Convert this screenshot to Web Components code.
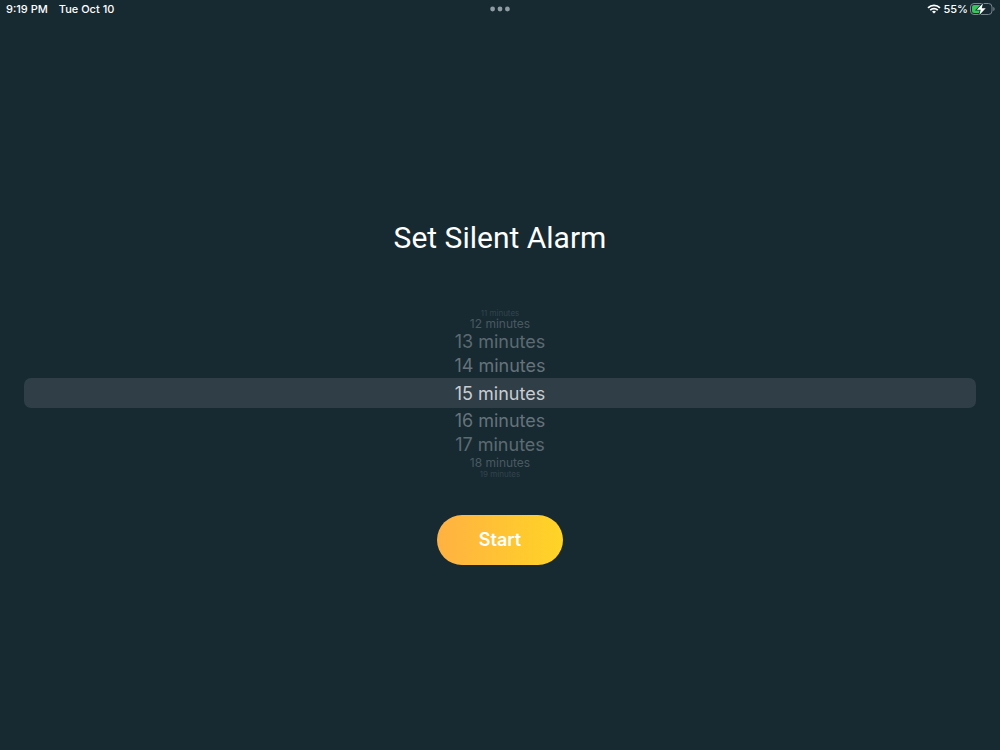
<!DOCTYPE html>
<html lang="en">
<head>
<meta charset="utf-8">
<meta name="viewport" content="width=device-width, initial-scale=1">
<title>Set Silent Alarm</title>
<style>
  html, body { margin: 0; background: #172a32; }
  body { font-family: Inter, "Liberation Sans", sans-serif; color: #fff; }
</style>
</head>
<body>
<alarm-app></alarm-app>
<script>
class StatusBar extends HTMLElement {
  constructor() {
    super();
    this.attachShadow({ mode: "open" }).innerHTML = `
      <style>
        :host { display: grid; grid-template-columns: 1fr auto 1fr; align-items: center;
                height: 18px; padding: 0 5px; font-size: 11px; line-height: 18px; font-weight: 500; }
        .left, .right { display: flex; align-items: center; }
        .left { gap: 11px; padding-left: 1px; }
        .right { justify-content: flex-end; gap: 2px; }
        svg { display: block; }
      </style>
      <div class="left"><span>9:19 PM</span><span>Tue Oct 10</span></div>
      <svg width="20" height="6" viewBox="0 0 20 6" fill="#8f9ca3" aria-hidden="true">
        <circle cx="2.6" cy="3" r="2.4"/><circle cx="10" cy="3" r="2.4"/><circle cx="17.4" cy="3" r="2.4"/>
      </svg>
      <div class="right">
        <svg width="14" height="10" viewBox="0 0 14 10" fill="none" stroke="#fff" stroke-width="1.7" aria-label="Wi-Fi">
          <path d="M1 3.8a8.5 8.5 0 0 1 12 0M3.2 6.1a5.4 5.4 0 0 1 7.6 0"/>
          <path d="M7 9.6 5 7.7a2.8 2.8 0 0 1 4 0z" fill="#fff" stroke="none"/>
        </svg>
        <span>55%</span>
        <svg width="25" height="12" viewBox="0 0 25 12" aria-label="Charging">
          <rect x=".5" y=".5" width="21.5" height="11" rx="3.5" fill="none" stroke="#78868c"/>
          <path d="M23.3 4v4c.8-.3 1.3-1.1 1.3-2s-.5-1.7-1.3-2z" fill="#78868c"/>
          <path d="M4 2h8v8H4a2 2 0 0 1-2-2V4a2 2 0 0 1 2-2z" fill="#35c759"/>
          <path d="M13 .2 6.8 6.800h3.900L9.300 11.900 15.700 5.200h-4z" fill="#fff" stroke="#172a32" stroke-width="1.6" paint-order="stroke"/>
        </svg>
      </div>`;
  }
}
customElements.define("status-bar", StatusBar);

class MinuteWheel extends HTMLElement {
  connectedCallback() {
    const value = Number(this.getAttribute("value"));
    const rows = [];
    for (let step = -4; step <= 4; step++) {
      rows.push(`<label class="d${Math.abs(step)}"><input type="radio" name="minutes" value="${value + step}"${step ? "" : " checked"}><span>${value + step} minutes</span></label>`);
    }
    this.attachShadow({ mode: "open" }).innerHTML = `
      <style>
        :host { display: block; font-size: 18px; }
        fieldset { margin: 0; padding: 0; border: 0; min-width: 0; display: flex; flex-direction: column; }
        label { display: flex; justify-content: center; align-items: center; cursor: pointer; }
        input { appearance: none; width: 0; height: 0; margin: 0; }
        .d0 { height: 30px; border-radius: 7px; background: #303e47; color: #c9cdd0; }
        .d1 { height: 25px; color: #66737a; }
        .d2 { height: 23px; color: #5d6a71; }
        .d3 { height: 13px; color: #4a5960; font-size: 12px; line-height: 12px; }
        .d4 { height: 9px; color: #33444c; font-size: 8px; line-height: 8px; }
      </style>
      <fieldset aria-label="Alarm length">${rows.join("")}</fieldset>`;
  }
}
customElements.define("minute-wheel", MinuteWheel);

class PillButton extends HTMLElement {
  constructor() {
    super();
    this.attachShadow({ mode: "open" }).innerHTML = `
      <style>
        :host { display: block; }
        button { min-width: 126px; height: 50px; padding: 0 40px; border: 0; border-radius: 25px;
                 background: linear-gradient(90deg, #ffb142, #ffd426); color: #fff;
                 font: 600 18px/24px Inter, "Liberation Sans", sans-serif; cursor: pointer; }
      </style>
      <button type="button"><slot></slot></button>`;
  }
}
customElements.define("pill-button", PillButton);

class AlarmApp extends HTMLElement {
  constructor() {
    super();
    this.attachShadow({ mode: "open" }).innerHTML = `
      <style>
        :host { display: flex; flex-direction: column; min-height: 100vh; }
        main { flex: 1; display: flex; flex-direction: column; align-items: center; justify-content: center;
               padding: 16px 24px 0; }
        h1 { margin: 0 0 51px; font: 400 30px/38px Roboto, "Liberation Sans", sans-serif; }
        minute-wheel { align-self: stretch; margin-bottom: 37px; }
      </style>
      <status-bar></status-bar>
      <main>
        <h1>Set Silent Alarm</h1>
        <minute-wheel value="15"></minute-wheel>
        <pill-button>Start</pill-button>
      </main>`;
  }
}
customElements.define("alarm-app", AlarmApp);
</script>
</body>
</html>
